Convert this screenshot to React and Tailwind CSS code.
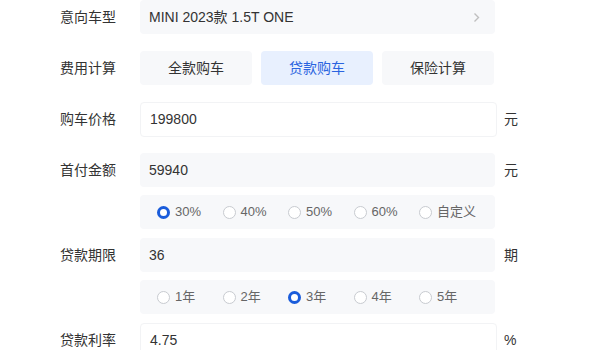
import React from "react";

const font = { fontFamily: '"Liberation Sans", "Noto Sans CJK SC", sans-serif' };

function Radio({ label, checked }) {
  return (
    <div className="flex items-center w-[65.5px] shrink-0">
      <span
        className={
          checked
            ? "w-[13px] h-[13px] rounded-full border-[3px] border-[#1a5cdb] bg-white box-border"
            : "w-[13px] h-[13px] rounded-full border border-[#c8cbd0] bg-white box-border"
        }
      />
      <span className="ml-[5px] text-[13px] text-[#666]">{label}</span>
    </div>
  );
}

function Row({ label, children, unit, className = "" }) {
  return (
    <div className={"flex items-center shrink-0 " + className}>
      <div className="w-[80px] pl-[60px] box-content shrink-0 text-[14px] text-[#333] whitespace-nowrap">{label}</div>
      <div className="w-[355px] h-full shrink-0">{children}</div>
      {unit && <div className="ml-[9px] text-[14px] text-[#333]">{unit}</div>}
    </div>
  );
}

export default function App() {
  return (
    <div className="w-[600px] h-[350px] bg-white overflow-hidden flex flex-col" style={font}>
      <Row label="意向车型" className="h-[34px]">
        <div className="h-full rounded-[4px] bg-[#f7f8fa] flex items-center pl-[9px] pr-[10px] text-[14px] text-[#333]">
          <span className="flex-1">MINI 2023款 1.5T ONE</span>
          <svg width="7" height="11" viewBox="0 0 7 11" className="mr-[5px]">
            <path d="M1.5 1.5 L5.5 5.5 L1.5 9.5" fill="none" stroke="#bfbfbf" strokeWidth="1.4" />
          </svg>
        </div>
      </Row>
      <Row label="费用计算" className="h-[34px] mt-[17px]">
        <div className="h-full flex gap-[9px]">
          <div className="w-[112px] h-full rounded-[4px] bg-[#f7f8fa] flex items-center justify-center text-[14px] text-[#333]">全款购车</div>
          <div className="w-[112px] h-full rounded-[4px] bg-[#e8f0fe] flex items-center justify-center text-[14px] text-[#2a64e0]">贷款购车</div>
          <div className="w-[112px] h-full rounded-[4px] bg-[#f7f8fa] flex items-center justify-center text-[14px] text-[#333]">保险计算</div>
        </div>
      </Row>
      <Row label="购车价格" unit="元" className="h-[35px] mt-[17px]">
        <div className="h-full w-[357px] rounded-[4px] bg-white border border-[#f2f3f5] flex items-center pl-[9px] text-[14px] text-[#333]">199800</div>
      </Row>
      <Row label="首付金额" unit="元" className="h-[34px] mt-[16px]">
        <div className="h-full rounded-[4px] bg-[#f7f8fa] flex items-center pl-[9px] text-[14px] text-[#333]">59940</div>
      </Row>
      <Row label="" className="h-[34px] mt-[8px]">
        <div className="h-full rounded-[4px] bg-[#f7f8fa] flex items-center pl-[17px]">
          <Radio label="30%" checked />
          <Radio label="40%" />
          <Radio label="50%" />
          <Radio label="60%" />
          <Radio label="自定义" />
        </div>
      </Row>
      <Row label="贷款期限" unit="期" className="h-[34px] mt-[9px]">
        <div className="h-full rounded-[4px] bg-[#f7f8fa] flex items-center pl-[9px] text-[14px] text-[#333]">36</div>
      </Row>
      <Row label="" className="h-[34px] mt-[8px]">
        <div className="h-full rounded-[4px] bg-[#f7f8fa] flex items-center pl-[17px]">
          <Radio label="1年" />
          <Radio label="2年" />
          <Radio label="3年" checked />
          <Radio label="4年" />
          <Radio label="5年" />
        </div>
      </Row>
      <Row label="贷款利率" unit="%" className="h-[35px] mt-[9px]">
        <div className="h-full w-[357px] rounded-[4px] bg-white border border-[#f2f3f5] flex items-center pl-[9px] text-[14px] text-[#333]">4.75</div>
      </Row>
    </div>
  );
}
